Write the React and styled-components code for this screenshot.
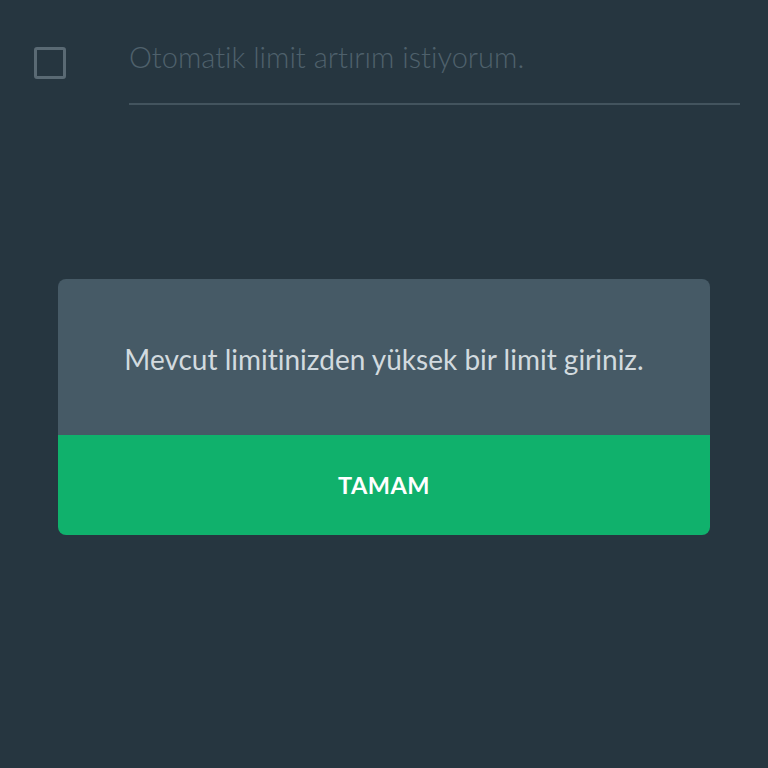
import React from "react";
import styled, { createGlobalStyle } from "styled-components";

const GlobalStyle = createGlobalStyle`
  html, body {
    margin: 0;
    padding: 0;
    background: #263640;
    font-family: Lato, "Noto Sans", sans-serif;
    font-variant-ligatures: none;
    font-feature-settings: "liga" 0, "clig" 0;
  }
`;

const Screen = styled.div`
  width: 768px;
  height: 768px;
  background: #263640;
  display: flex;
  flex-direction: column;
  overflow: hidden;
`;

const OptionRow = styled.div`
  display: flex;
  align-items: flex-start;
  padding: 41px 28px 0 34px;
`;

const CheckBox = styled.div`
  width: 26px;
  height: 26px;
  margin-top: 6px;
  border: 3px solid #5a6a74;
  border-radius: 3px;
  flex-shrink: 0;
`;

const OptionField = styled.div`
  flex: 1;
  margin-left: 63px;
  border-bottom: 2px solid #43545e;
  padding-bottom: 30px;
`;

const OptionLabel = styled.div`
  font-size: 29px;
  line-height: 32px;
  color: #4f616c;
  font-weight: 300;
`;

const DialogWrap = styled.div`
  display: flex;
  justify-content: center;
  padding-top: 174px;
`;

const Dialog = styled.div`
  width: 652px;
  border-radius: 8px;
  overflow: hidden;
  display: flex;
  flex-direction: column;
`;

const DialogBody = styled.div`
  height: 156px;
  background: #465a66;
  display: flex;
  align-items: center;
  justify-content: center;
`;

const Message = styled.p`
  margin: 0;
  padding-top: 4px;
  font-size: 28px;
  color: #d2dadf;
  font-weight: 400;
`;

const OkButton = styled.button`
  height: 100px;
  border: none;
  padding: 0;
  background: #10b16c;
  color: #ffffff;
  font-family: Lato, "Noto Sans", sans-serif;
  font-size: 23.5px;
  font-weight: 700;
  letter-spacing: 0.5px;
  cursor: pointer;
`;

export default function App() {
  return (
    <>
      <GlobalStyle />
      <Screen>
        <OptionRow>
          <CheckBox />
          <OptionField>
            <OptionLabel>Otomatik limit artırım istiyorum.</OptionLabel>
          </OptionField>
        </OptionRow>
        <DialogWrap>
          <Dialog>
            <DialogBody>
              <Message>Mevcut limitinizden yüksek bir limit giriniz.</Message>
            </DialogBody>
            <OkButton>TAMAM</OkButton>
          </Dialog>
        </DialogWrap>
      </Screen>
    </>
  );
}
